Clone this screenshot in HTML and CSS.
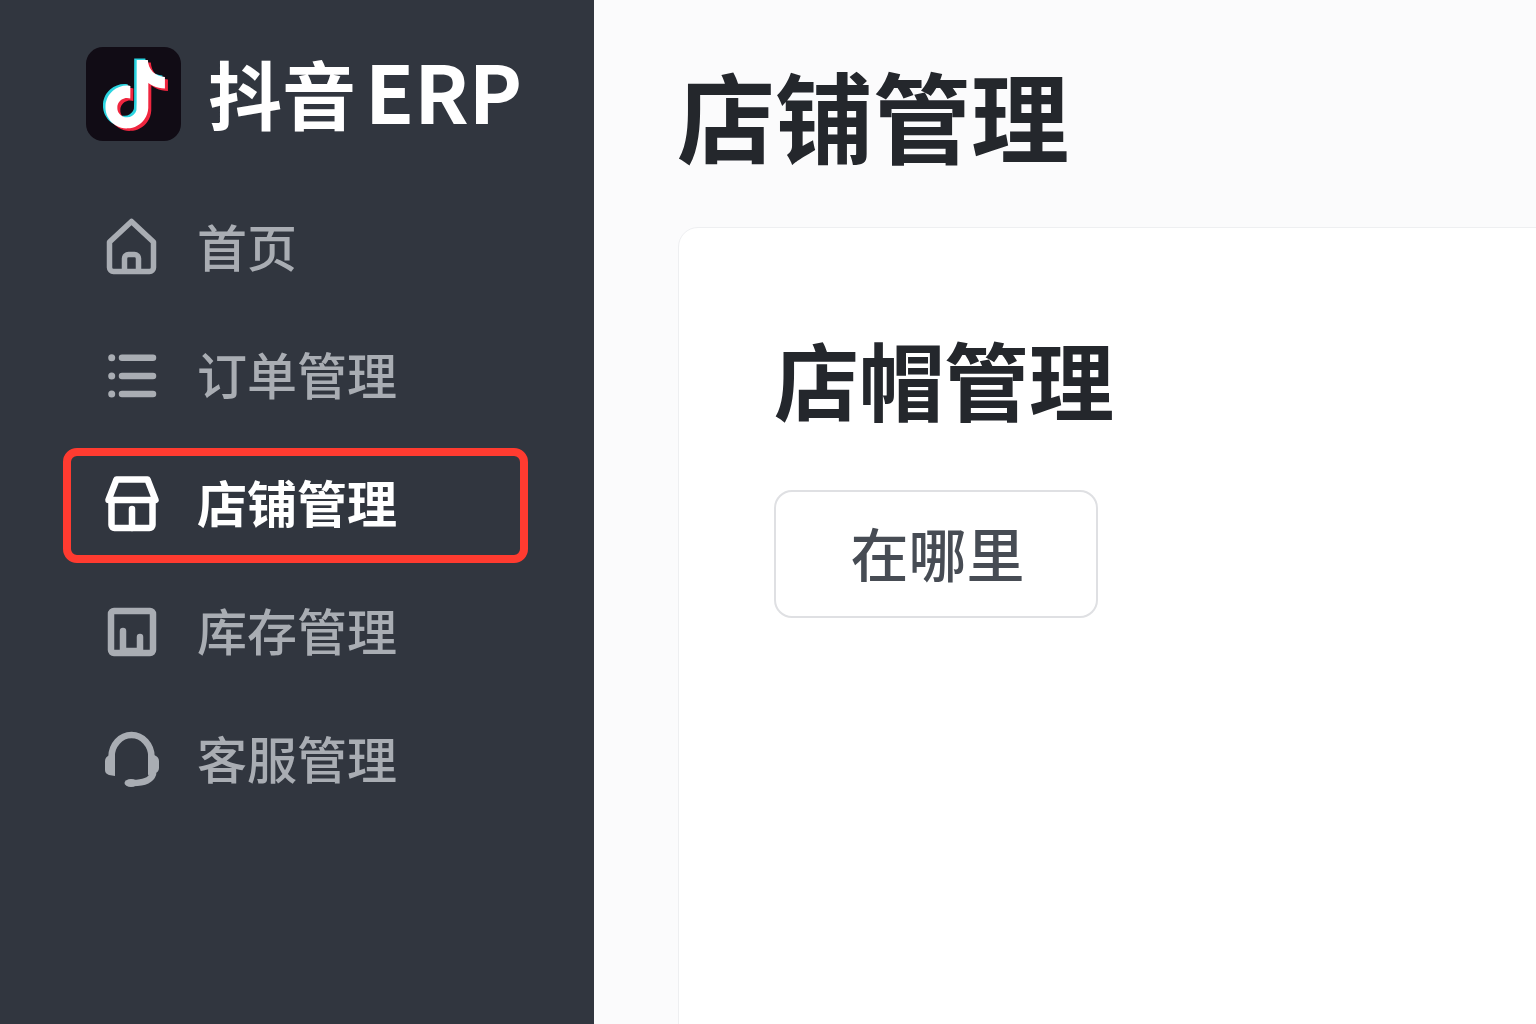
FILE: index.html
```html
<!DOCTYPE html>
<html lang="zh-CN">
<head>
	<meta charset="utf-8">
	<title>抖音ERP</title>
	<link rel="stylesheet" href="styles.css">
</head>
<body>
	<div class="sidebar">
		<div class="brand">
			<svg class="brand-logo" viewBox="0 0 95 94">
				<defs>
					<path id="note" d="M12.525.02c1.31-.02 2.61-.01 3.91-.02.08 1.53.63 3.09 1.75 4.17 1.12 1.11 2.7 1.62 4.24 1.79v4.03c-1.44-.05-2.89-.35-4.2-.97-.57-.26-1.1-.59-1.62-.93-.01 2.92.01 5.84-.02 8.75-.08 1.4-.54 2.79-1.35 3.94-1.31 1.92-3.58 3.17-5.91 3.21-1.43.08-2.86-.31-4.08-1.03-2.02-1.19-3.44-3.37-3.65-5.71-.02-.5-.03-1-.01-1.49.18-1.9 1.12-3.72 2.58-4.96 1.66-1.44 3.98-2.13 6.15-1.72.02 1.48-.04 2.96-.04 4.44-.99-.32-2.15-.23-3.02.37-.63.41-1.11 1.04-1.36 1.75-.21.51-.15 1.07-.14 1.61.24 1.64 1.82 3.02 3.5 2.87 1.12-.01 2.19-.66 2.77-1.61.19-.33.4-.67.41-1.06.1-1.79.06-3.57.07-5.36.01-4.03-.01-8.05.02-12.07z"/>
				</defs>
				<rect width="95" height="94" rx="17" fill="#110c15"/>
				<use href="#note" fill="#2bd4e0" transform="translate(12.500 11.500) scale(2.850)"/>
				<use href="#note" fill="#f0263f" transform="translate(18 15.500) scale(2.850)"/>
				<use href="#note" fill="#fff" transform="translate(15 13) scale(2.850)"/>
			</svg>
			<span class="brand-name">抖音<span class="brand-latin">ERP</span></span>
		</div>
		<div class="nav">
			<div class="nav-item">
				<svg class="nav-icon" viewBox="0 0 60 60">
					<path d="M7.500 24 29.500 3.500 51.500 24V49.500a4 4 0 0 1-4 4h-36a4 4 0 0 1-4-4z"/>
					<path d="M22.500 53V40.500a4 4 0 0 1 4-4h6a4 4 0 0 1 4 4V53"/>
				</svg>
				<span>首页</span>
			</div>
			<div class="nav-item">
				<svg class="nav-icon" viewBox="0 0 60 60">
					<circle class="solid" cx="9.700" cy="11.700" r="3.500"/>
					<circle class="solid" cx="9.700" cy="30" r="3.500"/>
					<circle class="solid" cx="9.700" cy="48" r="3.500"/>
					<path class="wide" d="M20 11.700H51M20 30H51M20 48H51"/>
				</svg>
				<span>订单管理</span>
			</div>
			<div class="nav-item active">
				<svg class="nav-icon" viewBox="0 0 60 60">
					<path d="M6.500 26 14.500 5.500H45.500L53.500 26Z"/>
					<path d="M9.500 26V51a3 3 0 0 0 3 3H47.500a3 3 0 0 0 3-3V26"/>
					<path d="M30 35V54"/>
				</svg>
				<span>店铺管理</span>
			</div>
			<div class="nav-item">
				<svg class="nav-icon" viewBox="0 0 60 60">
					<rect class="wide" x="9" y="9" width="42" height="42" rx="3"/>
					<path class="wide" d="M21 29V50M38 35V50M21 49H38"/>
				</svg>
				<span>库存管理</span>
			</div>
			<div class="nav-item">
				<svg class="nav-icon" viewBox="0 0 60 60">
					<path class="wide" d="M9.500 27a20 22 0 0 1 40 0"/>
					<path class="solid" d="M13 23V46L7 45C4 44 3 42 3 40V31C3 28 5 26 8 25Z"/>
					<path class="solid" d="M46 22V45L52 44C55 43 57 41 57 38V31C57 28 55 26 52 25Z"/>
					<path class="wide" d="M51 44C49 50 42 53 31 53"/>
					<ellipse class="solid" cx="29" cy="53" rx="6.500" ry="4"/>
				</svg>
				<span>客服管理</span>
			</div>
		</div>
	</div>
	<div class="main">
		<h1 class="page-title">店铺管理</h1>
		<div class="card">
			<h2 class="card-title">店帽管理</h2>
			<button class="where-btn">在哪里</button>
		</div>
	</div>
</body>
</html>
```

FILE: styles.css
```css
*{
	box-sizing: border-box;
}

html, body{
	width: 100%;
	height: 100%;
	margin: 0px;
	overflow: hidden;
}

body{
	display: flex;
	font-family: "Noto Sans CJK SC", "Noto Sans", sans-serif;
	background-color: #fbfbfc;
}

.sidebar{
	flex: 0 0 594px;
	height: 100%;
	padding: 47px 0 0 63px;
	background-color: #31363f;
}

.brand{
	display: flex;
	align-items: center;
	padding-left: 23px;
	height: 94px;
}

.brand-logo{
	width: 95px;
	height: 94px;
	flex: none;
}

.brand-name{
	margin: 0 0 8px 27px;
	font-size: 74px;
	font-weight: 700;
	line-height: 94px;
	color: #fff;
	white-space: nowrap;
}

.brand-latin{
	margin-left: 9px;
	font-size: 80px;
}

.nav{
	display: flex;
	flex-direction: column;
	gap: 13px;
	margin-top: 51px;
	width: 465px;
}

.nav-item{
	display: flex;
	align-items: center;
	height: 115px;
	padding: 0 0 3px 31px;
	border: 8px solid transparent;
	border-radius: 14px;
	font-size: 50px;
	font-weight: 500;
	color: #a9adb3;
}

.nav-item span{
	margin: 0 0 6px 35px;
}

.nav-icon{
	width: 60px;
	height: 60px;
	flex: none;
	fill: none;
	stroke: #a9adb3;
	stroke-width: 5.500;
	stroke-linecap: round;
	stroke-linejoin: round;
}

.nav-icon .solid{
	fill: #a9adb3;
	stroke: none;
}

.nav-icon .wide{
	stroke-width: 6.500;
}

.active{
	border-color: #ff3b30;
	color: #fff;
	font-weight: 700;
}

.active .nav-icon{
	stroke: #fff;
	stroke-width: 6.500;
}

.main{
	flex: 1;
	min-width: 0;
	display: flex;
	flex-direction: column;
	padding-left: 84px;
	overflow: hidden;
}

.page-title{
	margin: 0 0 0 -1px;
	height: 227px;
	padding-top: 43px;
	font-size: 98px;
	font-weight: 700;
	line-height: 140px;
	color: #24272c;
}

.card{
	flex: 1;
	margin: 0 -30px -30px 0;
	padding: 92px 0 0 95px;
	background-color: #fff;
	border: 1px solid #eeeff1;
	border-radius: 20px;
}

.card-title{
	margin: 0;
	font-size: 85px;
	font-weight: 700;
	line-height: 116px;
	color: #24272c;
}

.where-btn{
	display: block;
	width: 324px;
	height: 128px;
	margin-top: 54px;
	padding: 0 0 4px 3px;
	background-color: #fff;
	border: 2px solid #dfe0e3;
	border-radius: 18px;
	font-family: inherit;
	font-size: 58px;
	font-weight: 500;
	color: #474c54;
}
```
